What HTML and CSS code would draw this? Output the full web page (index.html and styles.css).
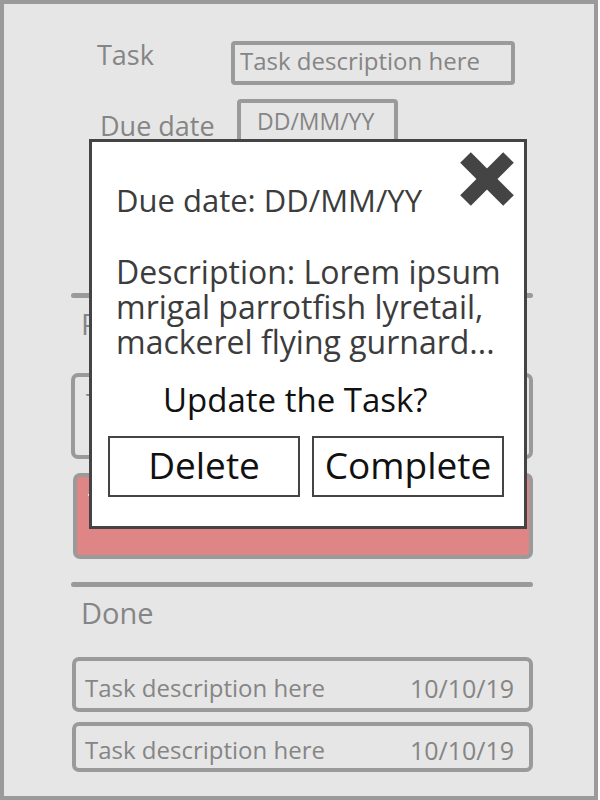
FILE: index.html
```html
<!DOCTYPE html>
<html>
<head>
<meta charset="utf-8">
<link rel="stylesheet" href="styles.css">
</head>
<body>
<div class="frame">
  <div class="form">
    <div class="row row-task">
      <span class="label label-task">Task</span>
      <div class="input input-task">Task description here</div>
    </div>
    <div class="row row-date">
      <span class="label label-date">Due date</span>
      <div class="input input-date">DD/MM/YY</div>
    </div>
  </div>

  <div class="section section-pending">
    <div class="rule"></div>
    <div class="heading">Pending</div>
    <div class="card card-tall card-first"><span class="card-text">Task description here</span><span class="card-date">10/10/19</span></div>
    <div class="card card-tall card-red"><span class="card-text">Task description here</span><span class="card-date">10/10/19</span></div>
  </div>

  <div class="section section-done">
    <div class="rule"></div>
    <div class="heading">Done</div>
    <div class="card card-done card-first-done"><span class="card-text">Task description here</span><span class="card-date">10/10/19</span></div>
    <div class="card card-done card-last"><span class="card-text">Task description here</span><span class="card-date">10/10/19</span></div>
  </div>

  <div class="modal">
    <svg class="close" width="54" height="54" viewBox="0 0 54 54" aria-hidden="true">
      <line x1="5.5" y1="5.5" x2="48.5" y2="48.5" stroke="#444" stroke-width="15"/>
      <line x1="48.5" y1="5.5" x2="5.5" y2="48.5" stroke="#444" stroke-width="15"/>
    </svg>
    <p class="modal-line modal-date">Due date: DD/MM/YY</p>
    <p class="modal-line modal-desc">Description: Lorem ipsum<br>mrigal parrotfish lyretail,<br>mackerel flying gurnard...</p>
    <p class="modal-line modal-question">Update the Task?</p>
    <div class="actions">
      <div class="btn">Delete</div>
      <div class="btn">Complete</div>
    </div>
  </div>
</div>
</body>
</html>
```

FILE: styles.css
```css
html, body {
  margin: 0;
  padding: 0;
  background: #ffffff;
}

body {
  font-family: "Open Sans", "Noto Sans", "Liberation Sans", sans-serif;
}

.frame {
  position: relative;
  box-sizing: border-box;
  width: 598px;
  height: 800px;
  border: 4px solid #9a9a9a;
  background: #e6e6e6;
  overflow: hidden;
}

/* ---------- form ---------- */
.form {
  padding-left: 93px;
  padding-top: 37px;
}

.row {
  display: flex;
  align-items: flex-start;
}

.row-date {
  margin-top: 14px;
}

.label {
  font-size: 27px;
  line-height: 28px;
  color: #858585;
  white-space: nowrap;
}

.label-task {
  width: 134px;
}

.label-date {
  width: 137px;
  margin-left: 3px;
  margin-top: 13px;
}

.input {
  box-sizing: border-box;
  height: 44px;
  border: 4px solid #9a9a9a;
  border-radius: 4px;
  color: #858585;
  white-space: nowrap;
}

.input-task {
  width: 284px;
  padding-left: 5px;
  font-size: 24px;
  line-height: 32px;
}

.input-date {
  width: 161px;
  padding-left: 16px;
  font-size: 23px;
  line-height: 36px;
}

/* ---------- lists ---------- */
.section {
  padding-left: 67px;
  width: 462px;
}

.section-pending {
  margin-top: 150px;
}

.section-done {
  margin-top: 23px;
}

.rule {
  height: 5px;
  border-radius: 3px;
  background: #9a9a9a;
}

.heading {
  margin-top: 11px;
  padding-left: 10px;
  font-size: 29px;
  line-height: 30px;
  color: #858585;
}

.card {
  box-sizing: border-box;
  display: flex;
  justify-content: space-between;
  align-items: flex-start;
  border: 4px solid #9a9a9a;
  border-radius: 7px;
  padding: 0 15px 0 11px;
  font-size: 24px;
  line-height: 30px;
  color: #858585;
  white-space: nowrap;
}

.card-date {
  font-size: 25px;
}

.card-tall {
  height: 86px;
  padding-top: 10px;
}

.card-first {
  margin-top: 34px;
}

.card-red {
  margin-top: 14px;
  margin-left: 2px;
  background: #df8585;
  color: #ffffff;
}

.card-done {
  height: 55px;
  padding-top: 12px;
  padding-left: 9px;
  margin-left: 1px;
}

.card-first-done {
  margin-top: 29px;
}

.card-last {
  height: 50px;
  margin-top: 10px;
  padding-top: 9px;
}

/* ---------- modal ---------- */
.modal {
  position: absolute;
  left: 85px;
  top: 135px;
  box-sizing: border-box;
  width: 438px;
  height: 390px;
  border: 3px solid #444444;
  background: #ffffff;
  padding: 41px 0 0 24px;
}

.close {
  position: absolute;
  top: 10px;
  right: 10px;
  display: block;
}

.modal-line {
  margin: 0;
  font-size: 31px;
  line-height: 35px;
  color: #3c3c3c;
  white-space: nowrap;
}

.modal-desc {
  margin-top: 36px;
  font-size: 32px;
}

.modal-question {
  margin-top: 23px;
  padding-left: 47px;
  font-size: 33px;
  color: #111111;
}

.actions {
  display: flex;
  gap: 12px;
  margin-top: 19px;
  margin-left: -8px;
}

.btn {
  box-sizing: border-box;
  width: 192px;
  height: 61px;
  border: 2px solid #444444;
  text-align: center;
  font-size: 37px;
  line-height: 53px;
  color: #111111;
  white-space: nowrap;
}
```
